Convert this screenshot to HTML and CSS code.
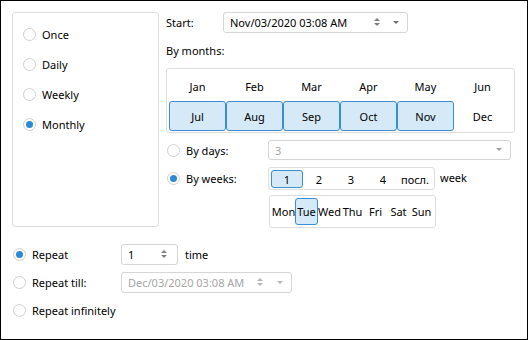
FILE: index.html
```html
<!DOCTYPE html>
<html lang="en">
  <head>
    <meta charset="UTF-8" />
    <title>Schedule</title>
    <link rel="stylesheet" href="styles.css">
  </head>
  <body>
    <div class="dialog">
      <div class="top">
        <div class="group modes">
          <div class="radio"><span class="circle"></span>Once</div>
          <div class="radio"><span class="circle"></span>Daily</div>
          <div class="radio"><span class="circle"></span>Weekly</div>
          <div class="radio"><span class="circle on"></span>Monthly</div>
        </div>

        <div class="settings">
          <div class="start-row">
            <span class="start-label">Start:</span>
            <div class="field start-field">
              <span class="value">Nov/03/2020 03:08 AM</span>
              <span class="spin"><i class="up"></i><i class="down"></i></span>
              <span class="caret"></span>
            </div>
          </div>

          <div class="caption">By months:</div>
          <div class="group months">
            <span class="cell">Jan</span>
            <span class="cell">Feb</span>
            <span class="cell">Mar</span>
            <span class="cell">Apr</span>
            <span class="cell">May</span>
            <span class="cell">Jun</span>
            <span class="cell sel">Jul</span>
            <span class="cell sel">Aug</span>
            <span class="cell sel">Sep</span>
            <span class="cell sel">Oct</span>
            <span class="cell sel">Nov</span>
            <span class="cell">Dec</span>
          </div>

          <div class="opt-row days-row">
            <div class="radio opt"><span class="circle"></span>By days:</div>
            <div class="field days-field disabled">
              <span class="value">3</span>
              <span class="caret"></span>
            </div>
          </div>

          <div class="opt-row weeks-row">
            <div class="radio opt"><span class="circle on"></span>By weeks:</div>
            <div class="group weeks">
              <span class="cell sel">1</span>
              <span class="cell">2</span>
              <span class="cell">3</span>
              <span class="cell">4</span>
              <span class="cell">посл.</span>
            </div>
            <span class="week-label">week</span>
          </div>

          <div class="group weekdays">
            <span class="cell">Mon</span>
            <span class="cell sel">Tue</span>
            <span class="cell">Wed</span>
            <span class="cell">Thu</span>
            <span class="cell">Fri</span>
            <span class="cell">Sat</span>
            <span class="cell">Sun</span>
          </div>
        </div>
      </div>

      <div class="bottom">
        <div class="end-row">
          <div class="radio end"><span class="circle on"></span>Repeat</div>
          <div class="field count-field">
            <span class="value">1</span>
            <span class="spin"><i class="up"></i><i class="down"></i></span>
          </div>
          <span class="time-label">time</span>
        </div>
        <div class="end-row">
          <div class="radio end"><span class="circle"></span>Repeat till:</div>
          <div class="field till-field disabled">
            <span class="value">Dec/03/2020 03:08 AM</span>
            <span class="spin"><i class="up"></i><i class="down"></i></span>
            <span class="caret"></span>
          </div>
        </div>
        <div class="end-row">
          <div class="radio end"><span class="circle"></span>Repeat infinitely</div>
        </div>
      </div>
    </div>
  </body>
</html>
```

FILE: styles.css
```css
body {
  margin: 0;
  font-family: "Noto Sans", "Liberation Sans", sans-serif;
  font-size: 11px;
  color: #000;
  background: #fff;
}
.dialog {
  width: 528px;
  height: 340px;
  box-sizing: border-box;
  border: 1px solid #000;
  padding: 11px 0 0 11px;
}
.top {
  display: flex;
  gap: 7px;
}
.group {
  border: 1px solid #dedede;
  border-radius: 3px;
  box-sizing: border-box;
}

/* radio buttons */
.radio {
  display: flex;
  align-items: center;
}
.circle {
  width: 13px;
  height: 13px;
  box-sizing: border-box;
  border: 1px solid #d0d0d0;
  border-radius: 50%;
  background: #fff;
  margin-right: 6px;
  display: flex;
  align-items: center;
  justify-content: center;
  flex: none;
}
.circle.on::after {
  content: "";
  width: 7px;
  height: 7px;
  border-radius: 50%;
  background: #2b8ad6;
}

.modes {
  width: 147px;
  height: 215px;
  padding: 6px 0 0 10px;
}
.modes .radio {
  height: 30px;
}

/* right side */
.settings {
  width: 349px;
}
.start-row {
  display: flex;
  align-items: center;
  height: 21px;
}
.start-label {
  width: 57px;
}
.field {
  position: relative;
  height: 21px;
  box-sizing: border-box;
  border: 1px solid #d6d6d6;
  border-radius: 3px;
  display: flex;
  align-items: center;
  padding-left: 6px;
}
.field.disabled {
  color: #a6a6a6;
}
.start-field {
  width: 185px;
}
.spin {
  position: absolute;
  top: 5px;
  display: flex;
  flex-direction: column;
  gap: 2px;
}
.spin i {
  width: 0;
  height: 0;
  border-left: 3px solid transparent;
  border-right: 3px solid transparent;
}
.spin .up {
  border-bottom: 3px solid #808080;
}
.spin .down {
  border-top: 3px solid #808080;
}
.caret {
  position: absolute;
  top: 8px;
  width: 0;
  height: 0;
  border-left: 3px solid transparent;
  border-right: 3px solid transparent;
  border-top: 3px solid #707070;
}
.start-field .spin { right: 27px; }
.start-field .caret { right: 8px; }

.caption {
  line-height: 16px;
  margin: 10px 0 9px;
}
.months {
  height: 65px;
  padding: 2px;
  display: grid;
  grid-template-columns: repeat(6, 57px);
  grid-auto-rows: 30px;
}
.cell {
  display: flex;
  align-items: center;
  justify-content: center;
  box-sizing: border-box;
  border: 1px solid transparent;
  border-radius: 3px;
}
.cell.sel {
  background: #d5e9f7;
  border-color: #3b8ed2;
}

.opt-row {
  display: flex;
  margin-top: 7px;
}
.opt {
  width: 102px;
  padding-left: 1px;
  box-sizing: border-box;
}
.days-row {
  height: 20px;
  align-items: center;
}
.days-field {
  width: 243px;
  height: 20px;
}
.days-field .caret {
  right: 8px;
  top: 7px;
  border-top-color: #a0a0a0;
}
.weeks-row {
  height: 23px;
  align-items: center;
}
.weeks {
  width: 167px;
  height: 23px;
  padding: 2px;
  display: grid;
  grid-template-columns: repeat(5, 32px);
  grid-auto-rows: 18px;
}
.week-label {
  margin-left: 5px;
  margin-top: -3px;
}
.weekdays {
  margin: 5px 0 0 103px;
  width: 167px;
  height: 33px;
  padding: 2px;
  display: grid;
  grid-template-columns: repeat(7, 23px);
  grid-auto-rows: 27px;
  white-space: nowrap;
}

/* bottom */
.bottom {
  margin-top: 12px;
}
.end-row {
  display: flex;
  align-items: center;
  height: 28px;
}
.end {
  width: 109px;
  padding-left: 1px;
  box-sizing: border-box;
  align-self: stretch;
}
.count-field {
  width: 57px;
}
.count-field .spin { right: 10px; }
.time-label {
  margin-left: 7px;
}
.till-field {
  width: 171px;
}
.till-field .spin { right: 28px; }
.till-field .caret { right: 8px; }
.till-field .spin .up { border-bottom-color: #b4b4b4; }
.till-field .spin .down { border-top-color: #b4b4b4; }
.till-field .caret { border-top-color: #b4b4b4; }
```
